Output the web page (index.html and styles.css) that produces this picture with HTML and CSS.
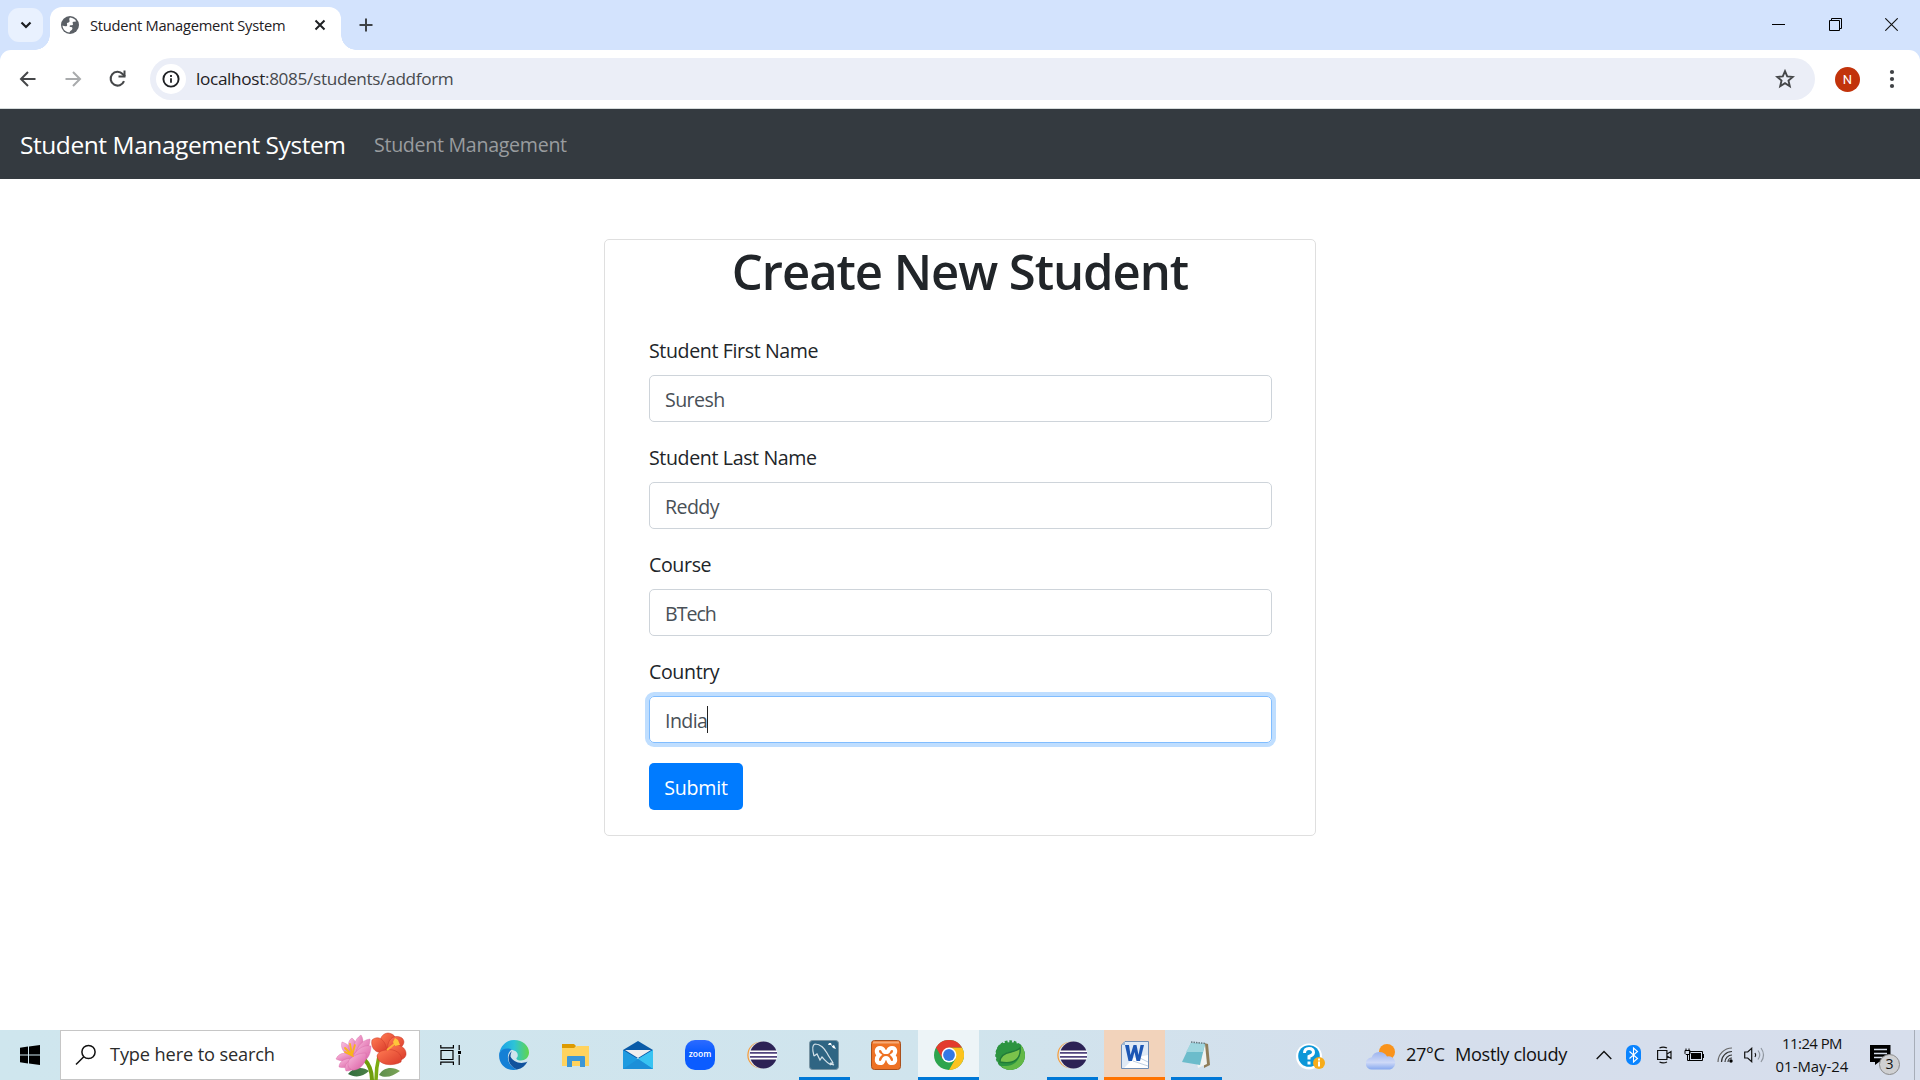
FILE: index.html
```html
<!DOCTYPE html>
<html lang="en">
<head>
<meta charset="utf-8">
<title>Student Management System</title>
<link rel="stylesheet" href="styles.css">
</head>
<body>
<div class="screen">
  <header class="tabstrip">
    <button class="tab-search"><svg width="12" height="12" viewBox="0 0 12 12"><path d="M1.5 3.5 6 8l4.500-4.500" fill="none" stroke="#1b1d20" stroke-width="2.200"/></svg></button>
    <div class="tab">
      <svg class="globe" width="18" height="20" viewBox="1 0 18 20"><circle cx="10" cy="10" r="9" fill="#5b6066"/><path d="M10 2.500c3 .3 5 1.500 6.300 4-1.500.3-3-.2-3.600.8-.5 1 .8 1.500.2 2.400-.8.8-2.400.2-3.200 1-.6.9.6 1.300 1.700 1.400 1.500.3 1.200 2 .3 3-.8.9-1.900 1.200-2.200 2.500C5.500 17 2.600 14 2.500 10.500c1.300.6 3.500 1.300 4.500.3.700-1-.6-1.700.1-2.700.7-.8 2.400-.4 2.500-1.900C9.700 4.800 8.500 4 10 2.500z" fill="#fff"/></svg>
      <span class="tab-title">Student Management System</span>
      <svg class="tab-close" width="12" height="12" viewBox="0 0 12 12"><path d="M1.500 1.500l9 9m0-9l-9 9" stroke="#1f2124" stroke-width="2"/></svg>
    </div>
    <svg class="new-tab" width="14" height="14" viewBox="0 0 14 14"><path d="M7 .5v13M.5 7h13" stroke="#3f4347" stroke-width="2"/></svg>
    <div class="window-controls">
      <svg width="13" height="13" viewBox="0 0 13 13"><path d="M0 6.500h13" stroke="#000"/></svg>
      <svg width="13" height="13" viewBox="0 0 13 13"><path d="M.5 2.500h10v10H.5zM2.500 2.500v-2h10v10h-2" fill="none" stroke="#000"/></svg>
      <svg width="13" height="13" viewBox="0 0 13 13"><path d="M.3.3l12.400 12.400M12.700.3L.3 12.700" stroke="#111" stroke-width="1.100"/></svg>
    </div>
  </header>
  <div class="toolbar-back">
    <div class="toolbar">
      <svg class="nav-icon" width="20" height="20" viewBox="0 0 20 20"><path d="M17.500 10H3.500M10 3L3 10l7 7" fill="none" stroke="#454749" stroke-width="2"/></svg>
      <svg class="nav-icon" width="20" height="20" viewBox="0 0 20 20"><path d="M2.500 10h14M10 3l7 7-7 7" fill="none" stroke="#a9abad" stroke-width="2"/></svg>
      <svg class="nav-icon" width="20" height="20" viewBox="0 0 20 20"><path d="M16 12.200A6.900 6.900 0 1 1 14.600 5L17 7.400" fill="none" stroke="#454749" stroke-width="2.100"/><path d="M17.500 1.500v7h-7V6.600h5V1.500z" fill="#454749"/></svg>
      <div class="omnibox">
        <span class="site-info"><svg width="18" height="18" viewBox="0 0 18 18"><circle cx="9" cy="9" r="7.600" fill="none" stroke="#1f2124" stroke-width="1.900"/><path d="M9 8.200v4.600M9 5v1.900" stroke="#1f2124" stroke-width="1.800"/></svg></span>
        <span class="url"><b>localhost</b>:8085/students/addform</span>
        <svg class="star" width="20" height="20" viewBox="0 0 20 20"><path d="M10 2.200l2.200 5.200 5.600.5-4.300 3.700 1.300 5.600L10 14.200l-4.800 3 1.300-5.600L2.200 7.900l5.600-.5z" fill="none" stroke="#454749" stroke-width="1.900"/></svg>
      </div>
      <span class="avatar">N</span>
      <svg class="menu" width="6" height="20" viewBox="0 0 6 20"><g fill="#3f4245"><circle cx="3" cy="3" r="2.100"/><circle cx="3" cy="10" r="2.100"/><circle cx="3" cy="17" r="2.100"/></g></svg>
    </div>
  </div>

  <nav class="navbar">
    <a class="brand">Student Management System</a>
    <a class="nav-link">Student Management</a>
  </nav>

  <main class="page">
    <section class="card">
      <h1>Create New Student</h1>
      <form class="card-body">
        <div class="form-group"><label>Student First Name</label><div class="control">Suresh</div></div>
        <div class="form-group"><label>Student Last Name</label><div class="control">Reddy</div></div>
        <div class="form-group"><label>Course</label><div class="control course">BTech</div></div>
        <div class="form-group"><label>Country</label><div class="control focused">India<i class="caret"></i></div></div>
        <div class="submit">Submit</div>
      </form>
    </section>
  </main>

  <footer class="taskbar">
    <div class="start"><svg width="20" height="20" viewBox="0 0 20 20"><path d="M0 2.800L8 1.600V9.500H0zM9 1.400L20 0v9.500H9zM0 10.500h8v7.900l-8-1.200zM9 10.500h11V20L9 18.500z"/></svg></div>
    <div class="search">
      <svg width="22" height="22" viewBox="0 0 22 22"><circle cx="13.500" cy="8" r="6.600" fill="none" stroke="#111" stroke-width="1.500"/><path d="M8.800 12.700L1 20.500" stroke="#111" stroke-width="1.500"/></svg>
      <span class="search-text">Type here to search</span>
      <svg class="flowers" width="72" height="48" viewBox="0 0 72 48">
        <defs>
          <linearGradient id="pk" x1="0" y1="0" x2="1" y2="1"><stop offset="0" stop-color="#f9bfe0"/><stop offset="1" stop-color="#d9589f"/></linearGradient>
          <linearGradient id="rd" x1="0" y1="0" x2="1" y2="1"><stop offset="0" stop-color="#ff7a52"/><stop offset="1" stop-color="#d93a2a"/></linearGradient>
          <linearGradient id="lf" x1="0" y1="0" x2="1" y2="0"><stop offset="0" stop-color="#2f6b3c"/><stop offset="1" stop-color="#7da557"/></linearGradient>
        </defs>
        <path d="M13 42c5-7 15-8 21-3-6 6-14 7-21 3zM44 43c4-8 14-9 21-4-7 5-14 8-21 4z" fill="url(#lf)"/>
        <path d="M29 27c6 6 8 13 8 21" fill="none" stroke="#6f9e0c" stroke-width="4"/><path d="M44 24c-2 8-3 14-3 24" fill="none" stroke="#7bab12" stroke-width="3.500"/>
        <g fill="url(#pk)" stroke="#d765a5" stroke-width=".4">
          <path d="M20 27C9 23 5 16 7 10c7 2 12 8 13 17z"/><path d="M20 27C12 16 12 9 17 6c6 5 7 12 3 21z"/><path d="M20 27C17 14 20 7 26 3c4 6 2 16-6 24z"/><path d="M20 27c0-10 6-19 15-20 0 9-5 17-15 20z"/>
          <path d="M20 27C13 20 5 19 1 27c6 3 13 3 19 0z"/><path d="M20 27C11 25 4 29 4 35c7 2 14-1 16-8z"/><path d="M18 27c-8 3-9 8-7 12 8 0 12-5 7-12z"/><path d="M16 30c2-11 12-18 20-16 0 11-7 20-20 16z"/><path d="M14 28c-3 6 1 11 6 10 8-2 12-10 11-17-8 0-13 3-17 7z"/>
        </g>
        <path d="M10 20l8 4M10 16l7 7M15 12l2 11M20 13l-3 10" stroke="#f9b51a" stroke-width="1.800" fill="none" stroke-linecap="round"/>
        <g fill="url(#rd)" stroke="#c93626" stroke-width=".5"><path d="M53 19C42 13 44 2 53 1c9 1 11 9 0 18z"/><path d="M53 19c-2-10 5-18 14-13 6 6-3 13-14 13z"/><path d="M52 19c-10 5-17-3-15-11 7-6 14 1 15 11z"/><path d="M52 18c8-9 20-4 19 5-3 9-15 4-19-5z"/><path d="M52 18c7-2 17 4 14 12-9 5-23 3-24-6 1-4 5-6 10-6z"/></g>
        <path d="M52 18l10-8" stroke="#ffb13b" stroke-width="2"/><path d="M58 10l2-4 3 2 2 5-5 1z" fill="#ffc53b"/>
      </svg>
    </div>
    <div class="task-view"><svg width="21" height="20" viewBox="0 0 21 20"><g fill="none" stroke="#000" stroke-width="1.200"><path d="M1 5.500h12v9H1zM.8 0v2.800h12.600V0M.8 20v-2.800h12.600V20M19.200 0v5M19.200 10v10"/></g><path d="M18 6h3v3h-3z"/></svg></div>
    <div class="apps">
      <div class="app"><svg width="30" height="30" viewBox="0 0 30 30">
        <defs><linearGradient id="e1"><stop offset="0" stop-color="#1ba0e8"/><stop offset=".5" stop-color="#2dc3d8"/><stop offset="1" stop-color="#61d64a"/></linearGradient></defs>
        <path d="M.5 13C2 5 8 0 15 0c9 0 15 6 15 12.500 0 5-4 8-8 8-3 0-5-1-4.500-2.500 2-1.500 2-6-2.500-7.500C10 8.500 3 9 .5 13z" fill="url(#e1)"/>
        <path d="M.3 13C3 8 9 7.500 13 9.500c-3 1.500-4.500 5-4 9 .5 5 4 9 9.500 11C9 32-1.500 25 .3 13z" fill="#1480d6"/>
        <path d="M13 11c-6 5-4 15 5 18.500 5-1 8.500-4 10.500-8-7 3.500-15 0-17-5 0-2 .5-4 1.500-5.500z" fill="#10529d"/></svg></div>
      <div class="app"><svg width="28" height="24" viewBox="0 0 28 24"><path d="M0 1h12l2 2-2 3H0z" fill="#dd9a00"/><path d="M0 5h12l3-2h12v20H0z" fill="#ffd35e"/><path d="M5 24V14q0-1 1-1h16q1 0 1 1v10h-5v-6h-8v6z" fill="#3c97d6"/></svg></div>
      <div class="app"><svg width="30" height="28" viewBox="0 0 30 28"><path d="M0 9L15 0l15 9v8H0z" fill="#0a5ba8"/><path d="M0 9l15 9L30 9v19H0z" fill="#1e9be0"/><path d="M30 9v19L15 18z" fill="#38c3f2"/><path d="M0 28l15-10 15 10z" fill="#1c8fd8"/><path d="M2 9h26L15 17z" fill="#efefef"/></svg></div>
      <div class="app"><span class="zoom-logo">zoom</span></div>
      <div class="app"><svg width="30" height="28" viewBox="0 0 30 28"><circle cx="13.500" cy="14" r="13.200" fill="#f79a33"/><circle cx="15" cy="14" r="13.500" fill="#dbe3ec"/><circle cx="16.500" cy="14" r="13.500" fill="#2c2255"/><path d="M3 9.500h27v9H3z" fill="#fff"/><path d="M3 11.800h27M3 15.800h27" stroke="#51447f" stroke-width="1.700"/></svg></div>
      <div class="app open"><svg width="30" height="30" viewBox="0 0 30 30"><rect x=".5" y=".5" width="29" height="29" rx="3" fill="#2f6583" stroke="#7894a3"/><path d="M5 16C3 9 3 5 6 4c6 0 9 4 12 9 2 4 4 6 6 10l-3 0 4 2-4-1M5 16l3-2 3 6 2-3c3 3 5 6 9 8" fill="none" stroke="#d4e2e9" stroke-width="1.200"/><path d="M20 3l2 0 1 3 2-1 2 4-3-1-2-3-3 0z" fill="#fff"/></svg></div>
      <div class="app"><svg width="30" height="30" viewBox="0 0 30 30"><rect x=".5" y=".5" width="29" height="29" rx="3" fill="#ee7225" stroke="#a8501e"/><path d="M2 1.500h26v2H2z" fill="#f6aa77"/><path d="M9 8c-4 0-4 5-1 7-3 3-3 8 1 8 5 0 2-5 6-5s1 5 6 5c4 0 4-5 1-8 3-2 3-7-1-7-5 0-2 4-6 4s-1-4-6-4z" fill="none" stroke="#fff" stroke-width="4.200"/></svg></div>
      <div class="app open active"><svg width="30" height="30" viewBox="0 0 30 30"><circle cx="15" cy="15" r="15" fill="#2da44e"/><path d="M28 7.500A15 15 0 0 1 15 30l6.500-11.300L15 7.500z" fill="#fcc31e"/><path d="M2 7.500A15 15 0 0 1 28 7.500H15L8.500 18.700z" fill="#e33b2e"/><circle cx="15" cy="15" r="7.400" fill="#fff"/><circle cx="15" cy="15" r="5.900" fill="#3478e5"/></svg></div>
      <div class="app"><svg width="30" height="30" viewBox="0 0 30 30"><path d="M4 5C10 1 18 2 25 4l1 1c6 8 5 17-2 22-7 5-17 3-21-4C0 17 0 10 4 5z" fill="#2c9440"/><circle cx="15" cy="15" r="13" fill="none" stroke="#2c9440" stroke-width="3.500" stroke-dasharray="2.600 1.700"/><path d="M26 5c6 8 5 17-2 22-5 4-13 4-18-1 14 1 20-5 20-21z" fill="#62b847"/><path d="M5 22c0-7 5-9 11-10 5-1 7-2 9-4 1 10-5 17-20 14z" fill="#7ac24b" stroke="#207a38" stroke-width="1.300"/></svg></div>
      <div class="app open"><svg width="30" height="28" viewBox="0 0 30 28"><circle cx="13.500" cy="14" r="13.200" fill="#f79a33"/><circle cx="15" cy="14" r="13.500" fill="#dbe3ec"/><circle cx="16.500" cy="14" r="13.500" fill="#2c2255"/><path d="M3 9.500h27v9H3z" fill="#fff"/><path d="M3 11.800h27M3 15.800h27" stroke="#51447f" stroke-width="1.700"/></svg></div>
      <div class="app open attention"><svg width="28" height="28" viewBox="0 0 28 28"><path d="M4 .5h23.500v27H.5V4z" fill="#dfe9f5" stroke="#6e8db5"/><path d="M4 .5L.5 4H4z" fill="#9db5d2"/><path d="M12 17l15-3v13H3l7-7z" fill="#fff"/><path d="M12 20l15 5M17 16l10 5" stroke="#bfd0e3"/><path d="M4 4h4l1.500 10L12.500 4h3l2 10L19.500 4H23l-4 16h-3.500l-2-9-2.500 9H7.500z" fill="#1c56b4"/></svg></div>
      <div class="app open"><svg width="30" height="28" viewBox="0 0 30 28"><path d="M23 2l4 1 2 21-6 3z" fill="#8f7d59"/><path d="M24 3l2 20-9 4-1-5z" fill="#f0f3f2"/><path d="M10 2l14 1-5 21L1 21z" fill="#6cbccb"/><path d="M10 2l14 1-2 8-17 0z" fill="#9fd6df"/><path d="M10 1l14 1.500" stroke="#637a80" stroke-width="1.500" stroke-dasharray="1.500 1"/></svg></div>
    </div>
    <div class="tray">
      <svg class="help" width="30" height="28" viewBox="0 0 30 28"><circle cx="13" cy="13.500" r="13" fill="#fff"/><circle cx="13" cy="13" r="10.800" fill="#0d97d8"/><path d="M8.500 10q0-4.500 4.500-4.500t4.500 4q0 2.500-4.500 4v3M13 18.500v3" fill="none" stroke="#fff" stroke-width="3"/><circle cx="23" cy="20" r="6" fill="#f7ac1a"/><path d="M23 18.500v5M23 15.500v2" stroke="#fff" stroke-width="2"/></svg>
      <svg class="weather" width="30" height="26" viewBox="0 0 30 26"><defs><linearGradient id="cl" x1="0" y1="0" x2="0" y2="1"><stop offset="0" stop-color="#9db4ee"/><stop offset=".6" stop-color="#ced9f7"/><stop offset="1" stop-color="#86a8ef"/></linearGradient></defs><circle cx="21" cy="8" r="8" fill="#f9931c"/><path d="M6 25.500a6 6 0 0 1-.5-12A8.500 8.500 0 0 1 21 12.500a6.600 6.600 0 1 1 3 13z" fill="url(#cl)"/></svg>
      <span class="temp">27°C</span><span class="sky">Mostly cloudy</span>
      <svg class="chevron" width="16" height="10" viewBox="0 0 16 10"><path d="M.7 9L8 1.500 15.300 9" fill="none" stroke="#111" stroke-width="1.400"/></svg>
      <svg class="bt" width="15" height="20" viewBox="0 0 15 20"><rect width="15" height="20" rx="6.500" fill="#0a84ff"/><path d="M3.500 6.500l8 7L7.500 17V3l4 3.500-8 7" fill="none" stroke="#fff" stroke-width="1.100"/></svg>
      <svg class="cam" width="15" height="18" viewBox="0 0 15 18"><path d="M.6 4.500h9.300v9H.6zM10 8l4-2.500v7L10 10M2.500 2Q6 .2 10 2M2.500 16q3.500 1.800 7.500 0" fill="none" stroke="#111" stroke-width="1.200"/></svg>
      <svg class="bat" width="20" height="14" viewBox="0 0 20 14"><path d="M5.500 3.500h13v9h-13z" fill="none" stroke="#000"/><path d="M7 5h10v6H7zM18.500 6H20v4h-1.500z"/><path d="M1 2.500h5v3l-1 1H2l-1-1zM2 .5v2M5 .5v2M3.500 6v6.500H6" fill="none" stroke="#000"/></svg>
      <svg class="wifi" width="16" height="16" viewBox="0 0 16 16"><g fill="none" stroke="#333" stroke-width="1.200"><path d="M1 15A14 14 0 0 1 15 1" stroke="#666"/><path d="M4.500 15A10.500 10.500 0 0 1 15 4.500M8 15a7 7 0 0 1 7-7"/><path d="M11 15a4 4 0 0 1 4-4"/></g><circle cx="14" cy="14" r="1.700"/></svg>
      <svg class="vol" width="21" height="16" viewBox="0 0 21 16"><path d="M.7 5h3l4-3.700v13.400l-4-3.700h-3z" fill="none" stroke="#111" stroke-width="1.200"/><path d="M11 6q1.500 2 0 4" fill="none" stroke="#111" stroke-width="1.200"/><path d="M14 3.500q3.500 4.500 0 9M17 1q5 7 0 14" fill="none" stroke="#9097a0" stroke-width="1.200"/></svg>
      <div class="clock"><span class="time">11:24 PM</span><span>01-May-24</span></div>
      <div class="notes"><svg width="21" height="20" viewBox="0 0 21 20"><path d="M0 0h20.500v17H9l-4 3v-3H0z"/><path d="M4 4.500h13M4 8.500h13M4 12.500h9" stroke="#d6deeb" stroke-width="1.300"/></svg><span class="badge">3</span></div>
      <div class="peek"></div>
    </div>
  </footer>
</div>
</body>
</html>
```
FILE: styles.css
```css
* { box-sizing: border-box; }
body { margin: 0; font-family: "Open Sans", "Noto Sans", sans-serif; color: #212529; background: #fff; }
svg { display: block; flex: none; }
.screen { width: 1920px; height: 1080px; display: flex; flex-direction: column; overflow: hidden; }

/* Browser tab strip */
.tabstrip { height: 50px; flex: none; background: #d3e3fd; display: flex; padding-left: 8px; }
.tab-search { width: 35px; height: 34px; margin: 8px 7px 0 0; padding: 0; border: 0; border-radius: 11px; background: #e9f1fe; display: grid; place-items: center; }
.tab { position: relative; width: 291px; height: 43px; margin-top: 7px; border-radius: 12px 12px 0 0; background: #fff; display: flex; align-items: center; padding: 0 15px 7px 11px; }
.tab::before, .tab::after { content: ""; position: absolute; bottom: 0; width: 15px; height: 15px; }
.tab::before { left: -15px; background: radial-gradient(circle at 0 0, transparent 14.500px, #fff 15px); }
.tab::after { right: -15px; background: radial-gradient(circle at 100% 0, transparent 14.500px, #fff 15px); }
.tab-title { margin-left: 11px; font-size: 14.700px; letter-spacing: -0.26px; line-height: 20px; color: #1f2124; white-space: nowrap; }
.tab-close { margin-left: auto; }
.new-tab { margin: 18px 0 0 18px; }
.window-controls { margin: 18px 22px 0 auto; display: flex; gap: 43.500px; }

/* Browser toolbar */
.toolbar-back { height: 59px; flex: none; background: #d3e3fd; }
.toolbar { height: 59px; background: #fff; border-radius: 11px 11px 0 0; border-bottom: 1px solid #d5dbdb; display: flex; align-items: center; padding: 0 25px 0 18px; }
.nav-icon { margin-right: 25px; }
.omnibox { width: 1665px; height: 42px; margin-left: -3px; border-radius: 21px; background: #ebeef7; display: flex; align-items: center; padding: 0 20px 0 6px; }
.site-info { width: 30px; height: 30px; border-radius: 50%; background: #fff; display: grid; place-items: center; }
.url { margin-left: 10px; font-size: 17.200px; letter-spacing: -0.34px; line-height: 24px; color: #474a4e; white-space: nowrap; }
.url b { font-weight: 400; color: #1f2124; }
.star { margin-left: auto; }
.avatar { width: 25px; height: 25px; margin-left: 20px; border-radius: 50%; background: #c2330b; color: #fff; font: 13px/25px Roboto, sans-serif; text-align: center; }
.menu { margin-left: auto; }

/* Application navbar */
.navbar { height: 70px; flex: none; background: #343a40; display: flex; align-items: center; padding: 2px 0 0 20px; }
.brand { width: 354px; font-size: 24.500px; letter-spacing: -0.44px; color: #fff; line-height: 38px; white-space: nowrap; }
.nav-link { font-size: 19.600px; letter-spacing: -0.29px; color: #999c9f; line-height: 30px; white-space: nowrap; }

/* Student form */
.page { flex: 1; min-height: 0; padding-top: 60px; }
.card { width: 712px; margin: 0 auto; border: 1px solid #dfdfdf; border-radius: 5px; }
h1 { margin: 0; padding-top: 1px; height: 70px; font-size: 49px; letter-spacing: -1.050px; line-height: 60px; font-weight: 600; text-align: center; }
.card-body { padding: 25px 43px 25px 44px; font-size: 19.600px; letter-spacing: -0.38px; }
.form-group { margin-bottom: 20px; }
label { display: block; height: 40px; padding-top: 1px; line-height: 30px; }
.control { height: 47px; padding: 9px 15px 0; border: 1px solid #ced4da; border-radius: 5px; color: #495057; line-height: 30px; letter-spacing: -0.58px; display: flex; }
.control.course { letter-spacing: -1px; }
.control.focused { border-color: #80bdff; box-shadow: 0 0 0 4px #bfdeff; }
.caret { width: 1px; height: 27px; background: #222; }
.submit { width: 94px; height: 47px; padding-top: 10px; border-radius: 5px; background: #007bff; color: #fff; line-height: 30px; letter-spacing: -0.200px; text-align: center; }

/* Desktop taskbar */
.taskbar { height: 50px; flex: none; display: flex; background: linear-gradient(90deg, #cfe6ee 0%, #d0e4ed 50%, #d5deec 75%, #d7deec 100%); color: #111; }
.start { width: 60px; display: grid; place-items: center; }
.search { width: 360px; border: 1px solid #c6c6c6; background: #fff; display: flex; align-items: center; padding-left: 14px; }
.search-text { margin-left: 13px; padding-bottom: 2px; font-size: 18.200px; letter-spacing: -0.13px; white-space: nowrap; color: #2b2b2b; }
.flowers { margin: 2px 12px 0 auto; }
.task-view { width: 63px; display: flex; align-items: center; padding-left: 20px; }
.apps { display: flex; }
.app { position: relative; width: 62px; display: grid; place-items: center; }
.app.open::after { content: ""; position: absolute; left: 6px; bottom: 0; width: 51px; height: 3px; background: #0078d7; }
.app.active, .app.attention { background: #edf4f7; background-clip: content-box; padding-left: 1px; }
.app.active::after, .app.attention::after { left: 1px; width: 61px; }
.app.attention { background-color: #f2d3bb; }
.app.attention::after { background: #ff7300; }
.zoom-logo { width: 30px; height: 30px; border-radius: 10px; background: linear-gradient(#2d6bff, #0b5cff 40%); color: #fff; font: 600 8.500px/28px "Open Sans", sans-serif; text-align: center; }
.tray { flex: 1; display: flex; align-items: center; padding-left: 69px; }
.help { margin-top: 4px; }
.weather { margin: 3px 0 0 40px; }
.temp { margin-left: 10px; padding-bottom: 2px; font-size: 18.200px; letter-spacing: -0.4px; width: 49px; white-space: nowrap; }
.sky { padding-bottom: 2px; font-size: 18.200px; letter-spacing: -0.35px; width: 110px; white-space: nowrap; }
.chevron { margin-left: 31px; }
.bt { margin-left: 14px; }
.cam { margin-left: 16px; }
.bat { margin-left: 12px; }
.wifi { margin-left: 13px; }
.vol { margin-left: 11px; }
.clock { width: 90px; display: flex; flex-direction: column; align-items: center; font-size: 14.900px; line-height: 23px; margin-left: 2px; white-space: nowrap; }
.time { letter-spacing: -0.55px; }
.notes { position: relative; margin-left: 13px; }
.badge { position: absolute; left: 9px; top: 9px; width: 21px; height: 21px; border: 1px solid #8b8b8b; border-radius: 50%; background: #cfd0d2; font-size: 14px; line-height: 18px; text-align: center; }
.peek { width: 6px; height: 50px; margin-left: auto; border-left: 1px solid #a7adb8; }
```
